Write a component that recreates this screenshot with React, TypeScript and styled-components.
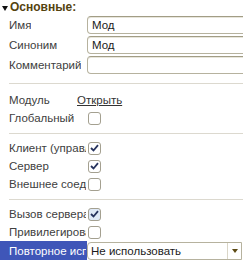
import React from "react";
import styled, { createGlobalStyle } from "styled-components";

const Global = createGlobalStyle`
  html, body { margin: 0; padding: 0; background: #fff; }
  body { font-family: "Liberation Sans", Arial, sans-serif; font-size: 11.5px; color: #3a3a3a; overflow: hidden; }
`;

const Panel = styled.div`
  width: 243px;
  height: 262px;
  overflow: hidden;
  display: flex;
  flex-direction: column;
`;

const Header = styled.div`
  height: 15px;
  display: flex;
  align-items: center;
  gap: 2px;
  padding-left: 2px;
  font-weight: bold;
  color: #54430f;
  font-size: 12px;
  line-height: 13px;
`;

const Triangle = styled.span`
  width: 0;
  height: 0;
  border-left: 3.5px solid transparent;
  border-right: 3.5px solid transparent;
  border-top: 5px solid #111;
  margin-top: 1px;
`;

const Row = styled.div<{ $h: number }>`
  height: ${(p) => p.$h}px;
  display: grid;
  grid-template-columns: 87px 1fr;
  align-items: center;
`;

const Label = styled.div<{ $active?: boolean }>`
  height: 100%;
  display: flex;
  align-items: center;
  padding-left: 9px;
  padding-right: 1px;
  overflow: hidden;
  color: ${(p) => (p.$active ? "#fff" : "#404040")};
  background: ${(p) => (p.$active ? "#3f56b8" : "transparent")};
`;

const LabelText = styled.span`
  display: block;
  max-width: 100%;
  white-space: nowrap;
  overflow: hidden;
`;

const Input = styled.div`
  height: 18px;
  box-sizing: border-box;
  margin-right: -10px;
  border: 1px solid #b6b29e;
  border-top-color: #a29d85;
  border-radius: 4px 0 0 4px;
  box-shadow: inset 0 1px 0 #e8e6dc;
  display: flex;
  align-items: center;
  padding-left: 4px;
  color: #1a1a1a;
`;

const Separator = styled.div<{ $top: number; $bottom: number }>`
  height: 1px;
  margin: ${(p) => p.$top}px 0 ${(p) => p.$bottom}px 9px;
  background: #dcd9cf;
`;

const Link = styled.span`
  margin-left: -10px;
  color: #333;
  text-decoration: underline;
`;

const Box = styled.div<{ $focus?: boolean }>`
  width: 13px;
  height: 13px;
  box-sizing: border-box;
  margin-left: 1px;
  border: 1px solid #a4a090;
  border-radius: 3px;
  background: ${(p) => (p.$focus ? "#dfe9f7" : "#fff")};
  display: flex;
  align-items: center;
  justify-content: center;
`;

const Combo = styled.div`
  height: 18px;
  box-sizing: border-box;
  margin-right: 1px;
  border: 1px solid #b6b29e;
  border-radius: 4px 0 0 4px;
  display: flex;
  align-items: stretch;
  color: #1a1a1a;
`;

const ComboText = styled.div`
  flex: 1;
  display: flex;
  align-items: center;
  padding-left: 3px;
`;

const ComboButton = styled.div`
  width: 13px;
  border-left: 1px solid #dad6c8;
  display: flex;
  align-items: center;
  justify-content: center;
`;

const Arrow = styled.span`
  width: 0;
  height: 0;
  border-left: 3.5px solid transparent;
  border-right: 3.5px solid transparent;
  border-top: 4px solid #5c4a14;
`;

const Check = ({ checked, focus }: { checked?: boolean; focus?: boolean }) => (
  <Box $focus={focus}>
    {checked && (
      <svg width="9" height="8" viewBox="0 0 9 8">
        <path d="M1 4 L3.5 6.5 L8 1.2" fill="none" stroke="#26335e" strokeWidth="1.8" />
      </svg>
    )}
  </Box>
);

const L = ({ children, active }: { children: React.ReactNode; active?: boolean }) => (
  <Label $active={active}>
    <LabelText>{children}</LabelText>
  </Label>
);

export default function App() {
  return (
    <>
      <Global />
      <Panel>
        <Header>
          <Triangle />
          <span>Основные:</span>
        </Header>
        <Row $h={20}>
          <L>Имя</L>
          <Input>Мод</Input>
        </Row>
        <Row $h={20}>
          <L>Синоним</L>
          <Input>Мод</Input>
        </Row>
        <Row $h={20}>
          <L>Комментарий</L>
          <Input />
        </Row>
        <Separator $top={8} $bottom={7} />
        <Row $h={18}>
          <L>Модуль</L>
          <Link>Открыть</Link>
        </Row>
        <Row $h={18}>
          <L>Глобальный</L>
          <Check />
        </Row>
        <Separator $top={6} $bottom={5} />
        <Row $h={18}>
          <L>Клиент (управляемое приложение)</L>
          <Check checked />
        </Row>
        <Row $h={18}>
          <L>Сервер</L>
          <Check checked />
        </Row>
        <Row $h={18}>
          <L>Внешнее соединение</L>
          <Check />
        </Row>
        <Separator $top={6} $bottom={5} />
        <Row $h={18}>
          <L>Вызов сервера</L>
          <Check checked focus />
        </Row>
        <Row $h={18}>
          <L>Привилегированный</L>
          <Check />
        </Row>
        <Row $h={19}>
          <L active>Повторное использование</L>
          <Combo>
            <ComboText>Не использовать</ComboText>
            <ComboButton>
              <Arrow />
            </ComboButton>
          </Combo>
        </Row>
      </Panel>
    </>
  );
}
